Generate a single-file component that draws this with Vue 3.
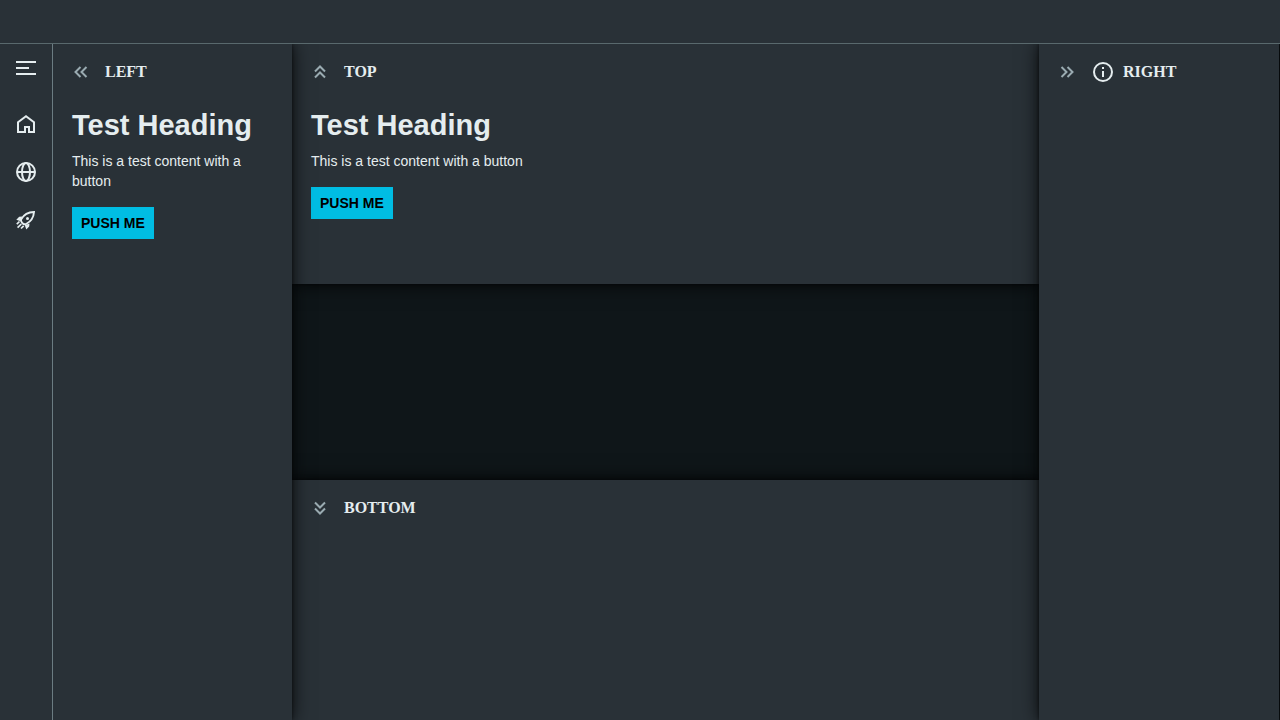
<script setup>
const navItems = [
  { label: 'Home', icon: 'home' },
  { label: 'Globe', icon: 'globe' },
  { label: 'Rocket', icon: 'rocket' },
]
const chevrons = {
  left: 'M6.500 1l-5 5 5 5M12.500 1l-5 5 5 5',
  right: 'M1.500 1l5 5-5 5M7.500 1l5 5-5 5',
  top: 'M2 6.500l5-5 5 5M2 12.500l5-5 5 5',
  bottom: 'M2 1.500l5 5 5-5M2 7.500l5 5 5-5',
}
</script>

<template>
  <div class="app">
    <header class="app-header"></header>
    <div class="body">
      <nav class="menu" aria-label="Main">
        <button class="menu-btn expand" aria-label="Expand menu">
          <svg width="20" height="14" viewBox="0 0 20 14"><path d="M0 0h20v2H0zM0 6h13v2H0zM0 12h20v2H0z" fill="currentColor" /></svg>
        </button>
        <button v-for="item in navItems" :key="item.icon" class="menu-btn" :aria-label="item.label">
          <svg v-if="item.icon === 'home'" width="20" height="20" viewBox="0 0 20 20" fill="none" stroke="currentColor" stroke-width="2">
            <path d="M2 8.300 10 2.200l8 6.100V18h-5v-5H9v5H2z" />
          </svg>
          <svg v-else-if="item.icon === 'globe'" width="20" height="20" viewBox="0 0 20 20" fill="none" stroke="currentColor" stroke-width="2">
            <circle cx="10" cy="10" r="9" /><ellipse cx="10" cy="10" rx="4" ry="9" /><path d="M1 10h18" />
          </svg>
          <svg v-else width="20" height="20" viewBox="0 0 20 20">
            <path d="M18 2C12 2.200 7.800 4.600 5.200 9.200c-.6 1.300 0 2.800 1 3.800s2.600 1.600 3.900 1C15 11.500 17.600 8 18 2z" fill="none" stroke="currentColor" stroke-width="1.900" />
            <circle cx="11.500" cy="8.500" r="1.500" fill="currentColor" />
            <path d="M6.200 6.600 3.200 6.800.3 9.700l4.200 1.500zM13.500 13.400l-.3 3L10.300 19.500l-1.500-4.200z" fill="currentColor" />
            <path d="M3.500 11.500.8 14.200M5.300 14 1.600 17.700M7.700 15.800 5 18.500" fill="none" stroke="currentColor" stroke-width="1.700" />
          </svg>
        </button>
      </nav>
      <main class="layout">
        <section class="pane side">
          <div class="pane-head">
            <button class="toggle" aria-label="Collapse left pane">
              <svg width="14" height="12" viewBox="0 0 14 12"><path :d="chevrons.left" /></svg>
            </button>
            <span class="title">LEFT</span>
          </div>
          <h1>Test Heading</h1>
          <p>This is a test content with a button</p>
          <button class="push">PUSH ME</button>
        </section>
        <div class="center">
          <section class="pane row">
            <div class="pane-head">
              <button class="toggle" aria-label="Collapse top pane">
                <svg width="14" height="14" viewBox="0 0 14 14"><path :d="chevrons.top" /></svg>
              </button>
              <span class="title">TOP</span>
            </div>
            <h1>Test Heading</h1>
            <p>This is a test content with a button</p>
            <button class="push">PUSH ME</button>
          </section>
          <div class="content"></div>
          <section class="pane row">
            <div class="pane-head">
              <button class="toggle" aria-label="Collapse bottom pane">
                <svg width="14" height="14" viewBox="0 0 14 14"><path :d="chevrons.bottom" /></svg>
              </button>
              <span class="title">BOTTOM</span>
            </div>
          </section>
        </div>
        <section class="pane side">
          <div class="pane-head">
            <button class="toggle" aria-label="Collapse right pane">
              <svg width="14" height="12" viewBox="0 0 14 12"><path :d="chevrons.right" /></svg>
            </button>
            <svg class="info" width="20" height="20" viewBox="0 0 20 20">
              <circle cx="10" cy="10" r="9" fill="none" stroke="currentColor" stroke-width="2" />
              <path d="M9 5h2v2H9zM9 9h2v6H9z" fill="currentColor" />
            </svg>
            <span class="title">RIGHT</span>
          </div>
        </section>
      </main>
    </div>
  </div>
</template>

<style>
body {
  background: #0f1619;
}
</style>

<style scoped>
.app {
  display: flex;
  flex-direction: column;
  height: 100vh;
  overflow: hidden;
  color: #e5edef;
  font-family: "Liberation Sans", Arial, sans-serif;
  font-size: 14px;
  line-height: 20px;
}
.app *,
.app {
  box-sizing: border-box;
}
button {
  border: 0;
  padding: 0;
  background: none;
  color: inherit;
  font: inherit;
  cursor: pointer;
}
svg {
  display: block;
}
.app-header {
  flex: none;
  height: 44px;
  background: #293137;
  border-bottom: 1px solid #59696d;
}
.body {
  flex: 1;
  display: flex;
  min-height: 0;
}
.menu {
  flex: none;
  width: 53px;
  background: #293137;
  border-right: 1px solid #6b7c82;
}
.menu-btn {
  display: flex;
  align-items: center;
  justify-content: center;
  width: 52px;
  height: 48px;
}
.expand {
  margin-bottom: 8px;
}
.layout {
  flex: 1;
  display: flex;
  min-width: 0;
  padding-right: 1px;
  overflow: hidden;
}
.pane {
  background: #293137;
  padding: 12px 19px;
}
.side,
.row {
  position: relative;
  flex: none;
  box-shadow: 0 0 4px rgba(0, 0, 0, 0.6), 0 0 18px rgba(0, 0, 0, 0.8);
}
.side {
  z-index: 2;
  width: 240px;
}
.side:first-child {
  width: 239px;
}
.center {
  flex: 1;
  display: flex;
  flex-direction: column;
  min-width: 0;
}
.row {
  height: 240px;
}
.content {
  flex: 1;
}
.pane-head {
  display: flex;
  align-items: center;
  height: 32px;
}
.toggle {
  display: flex;
  align-items: center;
  justify-content: center;
  width: 18px;
  height: 32px;
  margin-right: 15px;
  color: #9aabb1;
}
.toggle path {
  fill: none;
  stroke: currentColor;
  stroke-width: 2;
}
.title {
  font-family: "Liberation Serif", "Times New Roman", serif;
  font-size: 16px;
  font-weight: 700;
}
.info {
  margin: 0 10px 0 2px;
}
h1 {
  margin: 19px 0 8px;
  font-size: 29px;
  line-height: 36px;
  font-weight: 700;
}
p {
  margin: 0 0 16px;
}
.push {
  height: 32px;
  padding: 0 9px;
  background: #00bde3;
  color: #000;
  font-weight: 700;
}
</style>
